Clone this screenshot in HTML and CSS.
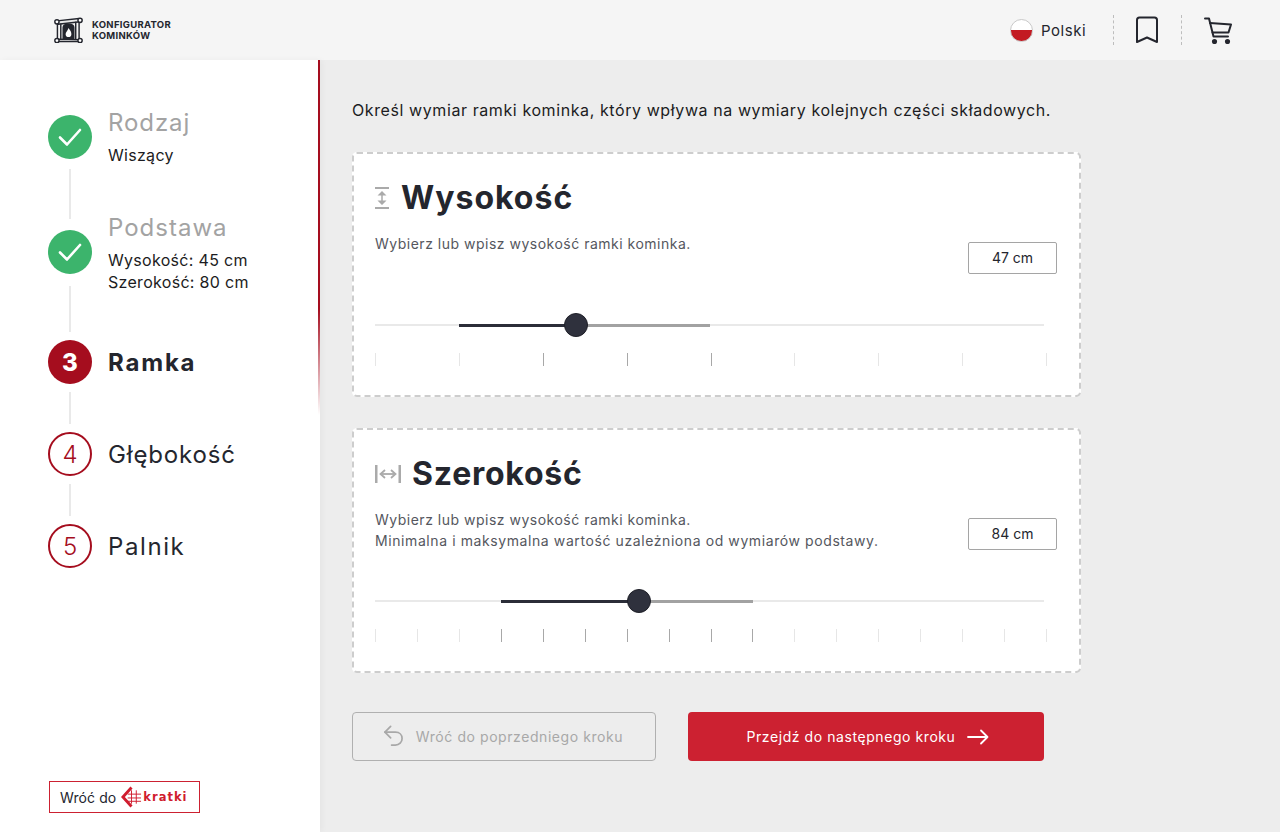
FILE: index.html
```html
<!DOCTYPE html>
<html lang="pl">
<head>
<meta charset="utf-8">
<title>Konfigurator kominków</title>
<link rel="stylesheet" href="styles.css">
</head>
<body>
<div class="app">
  <header class="topbar">
    <div class="brand">
      <svg class="brand-icon" viewBox="0 0 32 27" fill="none" stroke="#24262e" stroke-width="1.500" stroke-linejoin="round">
        <path d="M4 4 L27 1.500 L28 5 L5 7.500 Z" fill="#e9e9e9"/>
        <path d="M5 23 L27 23.500 L28 25.500 L4 25.500 Z" fill="#e9e9e9"/>
        <path d="M4.500 7 V23 M8 7 V23 M23.500 5 V23 M27 5 V23"/>
        <circle cx="4" cy="5" r="2.200" fill="#fff"/>
        <circle cx="28" cy="3.500" r="2.200" fill="#fff"/>
        <circle cx="4" cy="24.500" r="2.200" fill="#fff"/>
        <circle cx="28" cy="24.500" r="2.200" fill="#fff"/>
        <path d="M10.500 23 V11 Q10.500 7.500 16 7.500 Q21.500 7.500 21.500 11 V23 Z" fill="#24262e"/>
        <path d="M16 11.500 C17.800 14 19 15.500 19 17.800 C19 19.800 17.500 20.800 16 20.800 C14.500 20.800 13 19.800 13 17.800 C13 15.800 15 14.500 16 11.500 Z" fill="#fff" stroke="none"/>
      </svg>
      <div class="brand-name">KONFIGURATOR<br>KOMINKÓW</div>
    </div>
    <div class="tools">
      <span class="flag"></span>
      <span class="lang">Polski</span>
      <span class="sep sep-first"></span>
      <svg class="bookmark" viewBox="0 0 24 28" fill="none" stroke="#24262e" stroke-width="2" stroke-linejoin="round">
        <path d="M2 4 Q2 1.500 4.500 1.500 H19.500 Q22 1.500 22 4 V26 L12 21.500 L2 26 Z"/>
      </svg>
      <span class="sep"></span>
      <svg class="cart" viewBox="0 0 28 27" fill="none" stroke="#24262e" stroke-width="2" stroke-linejoin="round" stroke-linecap="round">
        <path d="M1 1.500 H5 L9.500 19.500 H24"/>
        <path d="M6 6 L27 7.500 L24.500 15.500 L8.500 15.500"/>
        <circle cx="10.500" cy="24.500" r="1.600" fill="#24262e"/>
        <circle cx="23.500" cy="24.500" r="1.600" fill="#24262e"/>
      </svg>
    </div>
  </header>
  <div class="body">
    <aside class="sidebar">
      <ol class="steps">
        <li class="step step-first step-line">
          <span class="dot dot-done"><svg viewBox="0 0 24 24" class="check" fill="none" stroke="#fff" stroke-width="2.600" stroke-linecap="round" stroke-linejoin="round"><path d="M2 12.500 L9 19.500 L22 5"/></svg></span>
          <div class="step-text">
            <div class="step-title title-done title-rodzaj">Rodzaj</div>
            <div class="step-sub">Wiszący</div>
          </div>
        </li>
        <li class="step step-second step-line">
          <span class="dot dot-done"><svg viewBox="0 0 24 24" class="check" fill="none" stroke="#fff" stroke-width="2.600" stroke-linecap="round" stroke-linejoin="round"><path d="M2 12.500 L9 19.500 L22 5"/></svg></span>
          <div class="step-text step-text-low">
            <div class="step-title title-done title-podstawa">Podstawa</div>
            <div class="step-sub">Wysokość: 45 cm<br>Szerokość: 80 cm</div>
          </div>
        </li>
        <li class="step step-line step-short">
          <span class="dot dot-active">3</span>
          <div class="step-title title-active">Ramka</div>
        </li>
        <li class="step step-line step-short">
          <span class="dot dot-next">4</span>
          <div class="step-title title-next">Głębokość</div>
        </li>
        <li class="step">
          <span class="dot dot-next">5</span>
          <div class="step-title title-palnik">Palnik</div>
        </li>
      </ol>
      <a class="backlink">
        <span class="backlink-text">Wróć do</span>
        <svg class="kratki-mark" viewBox="0 0 22 24" fill="none">
          <path d="M11 2 L2 12 L11 22" stroke="#d01c2e" stroke-width="3"/>
          <path d="M11 5 V19 M16 5 V19 M7 9 H21 M7 13 H21 M7 16.500 H21" stroke="#d01c2e" stroke-width="1"/>
        </svg>
        <span class="kratki-word">kratki</span>
      </a>
    </aside>
    <main class="main">
      <p class="intro">Określ wymiar ramki kominka, który wpływa na wymiary kolejnych części składowych.</p>

      <section class="card">
        <h2 class="card-head">
          <svg class="icon-height" viewBox="0 0 14 22" fill="none" stroke="#aaa">
            <path d="M0 1 H14 M0 21 H14" stroke-width="2"/>
            <path d="M7 5 V17" stroke-width="1.500"/>
            <path d="M2.500 8.500 L7 4 L11.500 8.500 Z M2.500 13.500 L7 18 L11.500 13.500 Z" fill="#aaa" stroke="none"/>
          </svg>
          <span class="head-text head-wide">Wysokość</span>
        </h2>
        <div class="card-row">
          <p class="desc">Wybierz lub wpisz wysokość ramki kominka.</p>
          <div class="value">47 cm</div>
        </div>
        <div class="slider">
          <span class="seg seg-dark" style="left:84px;width:117px"></span>
          <span class="seg seg-grey" style="left:201px;width:134px"></span>
          <span class="thumb" style="left:201px"></span>
        </div>
        <div class="ticks">
          <i class="tick"></i><i class="tick"></i><i class="tick tick-on"></i><i class="tick tick-on"></i><i class="tick tick-on"></i><i class="tick"></i><i class="tick"></i><i class="tick"></i><i class="tick"></i>
        </div>
      </section>

      <section class="card">
        <h2 class="card-head">
          <svg class="icon-width" viewBox="0 0 26 18" fill="none" stroke="#aaa">
            <path d="M1.250 0 V18 M24.750 0 V18" stroke-width="2.500"/>
            <path d="M6 9 H20" stroke-width="1.800"/>
            <path d="M10 5 L5.500 9 L10 13 M16 5 L20.500 9 L16 13" stroke-width="1.800"/>
          </svg>
          <span class="head-text">Szerokość</span>
        </h2>
        <div class="card-row">
          <p class="desc">Wybierz lub wpisz wysokość ramki kominka.<br><span class="desc-wide">Minimalna i maksymalna wartość uzależniona od wymiarów podstawy.</span></p>
          <div class="value">84 cm</div>
        </div>
        <div class="slider">
          <span class="seg seg-dark" style="left:126px;width:138px"></span>
          <span class="seg seg-grey" style="left:264px;width:114px"></span>
          <span class="thumb" style="left:264px"></span>
        </div>
        <div class="ticks">
          <i class="tick"></i><i class="tick"></i><i class="tick"></i><i class="tick tick-on"></i><i class="tick tick-on"></i><i class="tick tick-on"></i><i class="tick tick-on"></i><i class="tick tick-on"></i><i class="tick tick-on"></i><i class="tick tick-on"></i><i class="tick"></i><i class="tick"></i><i class="tick"></i><i class="tick"></i><i class="tick"></i><i class="tick"></i><i class="tick"></i>
        </div>
      </section>

      <div class="actions">
        <button class="btn btn-back" type="button">
          <svg class="btn-icon-back" viewBox="0 0 22 24" fill="none" stroke="#a8a8a8" stroke-width="1.800" stroke-linecap="round" stroke-linejoin="round">
            <path d="M8 1.500 L2 7.500 L8 13.500"/>
            <path d="M2 7.500 H13 C17.500 7.500 20 10.500 20 14 C20 18 17 21 13 21 H9"/>
          </svg>
          Wróć do poprzedniego kroku
        </button>
        <button class="btn btn-next" type="button">
          Przejdź do następnego kroku
          <svg class="btn-icon-next" viewBox="0 0 22 16" fill="none" stroke="#fff" stroke-width="1.800" stroke-linecap="round" stroke-linejoin="round">
            <path d="M1 8 H20.500 M14 1.500 L20.500 8 L14 14.500"/>
          </svg>
        </button>
      </div>
    </main>
  </div>
</div>
</body>
</html>
```
FILE: styles.css
```css
* { box-sizing: border-box; }
html, body { margin: 0; padding: 0; }
body {
  font-family: Inter, "Open Sans", sans-serif;
  color: #24262e;
  background: #ededed;
}
.app { width: 1280px; height: 832px; display: flex; flex-direction: column; overflow: hidden; }

/* top bar */
.topbar {
  height: 60px; flex: none; background: #f5f5f5;
  display: flex; align-items: center; justify-content: space-between;
  padding: 0 48px 0 53px;
}
.brand { display: flex; align-items: center; gap: 8px; }
.brand-icon { width: 31px; height: 26px; display: block; }
.brand-name { font-size: 9.5px; line-height: 11px; font-weight: 700; letter-spacing: 0.3px; color: #24262e; }
.tools { display: flex; align-items: center; }
.flag {
  width: 23px; height: 23px; border-radius: 50%; border: 1px solid #c9c9c9;
  background: linear-gradient(#fff 50%, #c31a22 50%);
}
.lang { font-size: 15px; margin-left: 8px; letter-spacing: 0.55px; width: 45px; white-space: nowrap; }
.sep { width: 0; height: 30px; border-left: 1px dashed #bdbdbd; }
.sep-first { margin-left: 27px; margin-right: 21px; }
.bookmark { width: 24px; height: 28px; margin-right: 22px; }
.cart { width: 28px; height: 27px; margin-left: 22px; }

/* layout */
.body { flex: 1; display: flex; min-height: 0; }
.sidebar {
  width: 320px; flex: none; background: #fff; position: relative;
  display: flex; flex-direction: column;
  padding: 48px 0 19px 48px;
  box-shadow: 2px 0 6px rgba(0,0,0,.04);
}
.sidebar::after {
  content: ""; position: absolute; right: 0; top: 0; width: 2px; height: 355px;
  background: linear-gradient(#a50d1e 70%, rgba(165,13,30,0));
}

/* steps */
.steps { list-style: none; margin: 0; padding: 0; display: flex; flex-direction: column; gap: 48px; }
.step { display: flex; align-items: center; gap: 16px; position: relative; }
.step-first { height: 58px; margin-bottom: -2px; }
.step-second { height: 80px; }
.step-text-low { margin-top: 2px; }
.step-line::after {
  content: ""; position: absolute; left: 21px; top: 100%; width: 2px; background: #e9e9e9;
  height: 32px; margin-top: 8px;
}
.step-first::after { height: 50px; margin-top: 3px; }
.step-second::after { height: 46px; margin-top: -6px; }
.dot {
  width: 44px; height: 44px; border-radius: 50%; flex: none;
  display: flex; align-items: center; justify-content: center;
  font-size: 24px;
}
.dot-done { background: #3cb46c; }
.check { width: 24px; height: 24px; }
.dot-active { background: #a50d1e; color: #fff; font-weight: 800; }
.dot-next { border: 2px solid #a50d1e; color: #a50d1e; font-weight: 300; }
.step-title { font-size: 24px; line-height: 30px; letter-spacing: 0.4px; white-space: nowrap; }
.title-done { color: #a3a3a3; }
.title-rodzaj { letter-spacing: 0.9px; }
.title-podstawa { letter-spacing: 1px; }
.title-active { font-weight: 700; letter-spacing: 1.8px; padding-top: 2px; }
.title-next { letter-spacing: 0.85px; padding-top: 2px; }
.title-palnik { letter-spacing: 1.6px; padding-top: 2px; }
.step-sub { font-size: 16px; line-height: 22px; margin-top: 6px; color: #1c1c22; letter-spacing: 0.3px; white-space: nowrap; }

/* back link */
.backlink {
  margin-top: auto; width: 151px; height: 32px; flex: none; margin-left: 1px;
  border: 1px solid #cc2131; background: #fff;
  display: flex; align-items: center; padding-left: 10px;
}
.backlink-text { font-size: 14px; letter-spacing: 0.1px; white-space: nowrap; }
.kratki-mark { width: 21px; height: 24px; margin-left: 5px; flex: none; }
.kratki-word { font-family: "DejaVu Sans", sans-serif; font-size: 11.5px; font-weight: 700; color: #d01c2e; letter-spacing: 1px; margin-left: 1px; }

/* main */
.main { flex: 1; padding: 40px 0 0 32px; }
.intro { margin: 0 0 32px; font-size: 16px; line-height: 20px; letter-spacing: 0.59px; color: #1c1c22; white-space: nowrap; }
.card {
  width: 729px; height: 245px; background: #fff; position: relative;
  border: 2px dashed #cdcdcd; border-radius: 5px;
  padding: 23px 22px 0 21px; margin-bottom: 31px;
}
.card-head { margin: 0; height: 42px; display: flex; align-items: center; font-size: 32px; font-weight: 700; letter-spacing: 0.75px; }
.head-text { line-height: 42px; }
.head-wide { letter-spacing: 1px; }
.icon-height { width: 14px; height: 22px; margin-right: 12px; }
.icon-width { width: 26px; height: 18px; margin-right: 11px; }
.card-row { display: flex; justify-content: space-between; align-items: flex-start; height: 91px; margin-top: 14px; }
.desc { margin: 0; font-size: 14px; line-height: 21px; letter-spacing: 0.5px; color: #55575e; white-space: nowrap; }
.desc-wide { letter-spacing: 0.59px; }
.value {
  width: 89px; height: 32px; margin: 9px 0 0 0; border: 1px solid #a5a5a5; border-radius: 2px;
  font-size: 14px; line-height: 30px; text-align: center; color: #24262e; background: #fff;
}
.slider { position: relative; width: 669px; height: 2px; background: #e9e9e9; margin-top: 0; }
.seg { position: absolute; top: 0; height: 3px; }
.seg-dark { background: #2b2d38; }
.seg-grey { background: #a2a2a2; }
.thumb {
  position: absolute; top: 1px; width: 24px; height: 24px; margin: -12px 0 0 -12px;
  border-radius: 50%; background: #2f313d; border: 1px solid #1f2028;
}
.ticks { display: flex; justify-content: space-between; width: 672px; margin-top: 27px; }
.tick { display: block; width: 1px; height: 13px; background: #e6e6e6; }
.tick-on { background: #a8a8a8; }

/* buttons */
.actions { display: flex; gap: 32px; margin-top: 39px; }
.btn {
  height: 49px; border-radius: 4px; font-family: inherit; font-size: 14px; letter-spacing: 0.57px;
  display: flex; align-items: center; justify-content: center; padding: 0;
}
.btn-back { width: 304px; background: transparent; border: 1px solid #b0b0b0; color: #a8a8a8; gap: 12px; padding-right: 2px; }
.btn-next { width: 356px; background: #cc2131; border: 0; color: #fff; gap: 12px; padding-left: 4px; }
.btn-icon-back { width: 21px; height: 23px; }
.btn-icon-next { width: 22px; height: 16px; }
```
